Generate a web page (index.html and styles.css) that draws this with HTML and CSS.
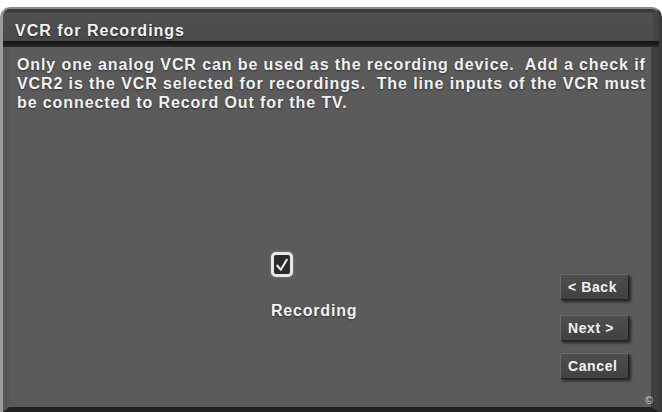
FILE: index.html
```
<!DOCTYPE html>
<html lang="en">
<head>
  <meta charset="UTF-8"/>
  <title>VCR for Recordings</title>
  <link rel="stylesheet" href="styles.css">
</head>
<body>
  <div class="frame">
    <!-- Title bar -->
    <div class="title-bar">VCR for Recordings</div>
    <div class="title-rule"></div>

    <!-- Body -->
    <div class="panel">
      <p class="intro">Only one analog VCR can be used as the recording device.&nbsp; Add a check if<br>VCR2 is the VCR selected for recordings.&nbsp; The line inputs of the VCR must<br>be connected to Record Out for the TV.</p>

      <div class="content">
        <div class="option">
          <div class="check-box">
            <svg viewBox="0 0 20 20" width="18" height="18">
              <path d="M3.5 10 L8.5 16 L16.5 2.5" fill="none" stroke="#eee" stroke-width="2.6" stroke-linejoin="round"/>
            </svg>
          </div>
          <div class="option-label">Recording</div>
        </div>

        <div class="buttons">
          <button class="btn">&lt; Back</button>
          <button class="btn btn-next">Next &gt;</button>
          <button class="btn btn-cancel">Cancel</button>
        </div>
      </div>
      <div class="corner-mark">&copy;</div>
    </div>
  </div>
</body>
</html>
```

FILE: styles.css
```
:root {
  --panel-bg: #5b5b5b;
  --title-bg: #4b4b4b;
  --text-color: #f2f2f2;
  --font-family: 'Liberation Sans', Arial, sans-serif;
}
* { margin:0; padding:0; box-sizing:border-box }
html, body { width:100%; height:100%; overflow:hidden; background:#fff }

.frame {
  margin-top:7px;
  height:405px;
  display:flex; flex-direction:column;
  font-family: var(--font-family);
  color: var(--text-color);
  background: var(--panel-bg);
  border-top:2px solid #8a8a8a;
  border-left:3px solid #9a9a9a;
  border-right:3px solid #3a3a3a;
  border-radius:10px 10px 0 0;
  overflow:hidden;
}

/* Title */
.title-bar {
  height:32px;
  background: linear-gradient(#3a3a3a 0, #3a3a3a 3px, #505050 4px, #4a4a4a 100%);
  padding:13px 0 0 12px;
  font-size:16px; font-weight:bold;
  letter-spacing:1px;
  line-height:18px;
  text-shadow:0 1px 2px rgba(0,0,0,0.6);
  border-right:6px solid #444;
}
.title-rule {
  height:6px;
  background: linear-gradient(#111, #2a2a2a);
}

/* Panel */
.panel {
  flex:1;
  display:flex; flex-direction:column;
  padding:8px 0 0 8px;
  border-left:6px solid #555;
  border-right:8px solid #3e3e3e;
  border-bottom:5px solid #222;
  position:relative;
}
.intro {
  font-size:16px; font-weight:bold;
  letter-spacing:0.9px;
  line-height:19px;
  white-space:nowrap;
  text-shadow:0 1px 2px rgba(0,0,0,0.5);
}

.content {
  flex:1;
  display:flex; justify-content:space-between;
  padding:0 22px 0 254px;
}

.option {
  display:flex; flex-direction:column; align-items:flex-start;
  margin-top:140px;
}
.check-box {
  width:22px; height:25px;
  border:3px solid #e8e8e8;
  border-radius:5px;
  background:#2b2b2b;
  display:flex; align-items:center; justify-content:center;
  box-shadow:0 0 3px rgba(255,255,255,0.3);
}
.option-label {
  margin-top:24px;
  font-size:16px; font-weight:bold;
  letter-spacing:0.8px;
  line-height:19px;
  text-shadow:0 1px 2px rgba(0,0,0,0.5);
}

.buttons {
  display:flex; flex-direction:column;
  margin-top:162px;
}
.btn {
  width:69px; height:26px;
  font-family: var(--font-family);
  font-size:14px; font-weight:bold;
  letter-spacing:0.6px;
  color: var(--text-color);
  background: linear-gradient(#4e4e4e, #414141);
  border:1px solid #6a6a6a;
  border-right-color:#222; border-bottom-color:#222;
  border-radius:2px;
  box-shadow:2px 2px 3px rgba(0,0,0,0.6);
  text-align:left; padding-left:7px;
}
.btn-next { margin-top:15px }
.btn-cancel { margin-top:12px }

.corner-mark {
  position:absolute; right:-2px; bottom:1px;
  font-size:11px; color:#ccc;
}
```
